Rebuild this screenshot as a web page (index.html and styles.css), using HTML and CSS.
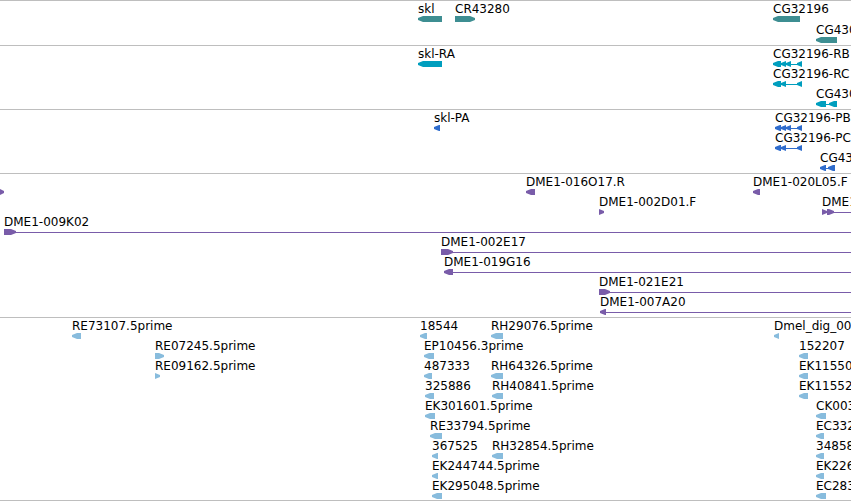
FILE: index.html
```
<!DOCTYPE html>
<html lang="en">
  <head>
    <meta charset="UTF-8" />
    <meta name="viewport" content="width=device-width, initial-scale=1.0" />
    <title>Genome Browser</title>
    <link rel="stylesheet" href="styles.css">
  </head>
  <body>
    <main class="browser">
      <!-- genes -->
      <section class="track genes">
        <div class="row">
          <div class="feature" style="left: 418px"><span class="label">skl</span><div class="glyph"><i class="exon rev" style="width: 24px"></i></div></div>
          <div class="feature" style="left: 455px"><span class="label">CR43280</span><div class="glyph"><i class="exon fwd" style="width: 20px"></i></div></div>
          <div class="feature" style="left: 773px"><span class="label">CG32196</span><div class="glyph"><i class="exon rev" style="width: 27px"></i></div></div>
        </div>
        <div class="row">
          <div class="feature" style="left: 816px"><span class="label">CG430</span><div class="glyph"><i class="exon rev" style="width: 21px"></i></div></div>
        </div>
      </section>

      <!-- transcripts -->
      <section class="track transcripts">
        <div class="row">
          <div class="feature" style="left: 418px"><span class="label">skl-RA</span><div class="glyph"><i class="exon rev" style="width: 24px"></i></div></div>
          <div class="feature" style="left: 773px"><span class="label">CG32196-RB</span><div class="glyph"><i class="exon rev" style="width: 8px"></i><i class="exon rev" style="width: 5px"></i><i class="exon rev" style="width: 5px"></i><i class="intron" style="width: 6px"></i><i class="exon rev" style="width: 5px"></i></div></div>
        </div>
        <div class="row">
          <div class="feature" style="left: 773px"><span class="label">CG32196-RC</span><div class="glyph"><i class="exon rev" style="width: 8px"></i><i class="exon rev" style="width: 5px"></i><i class="intron" style="width: 11px"></i><i class="exon rev" style="width: 5px"></i></div></div>
        </div>
        <div class="row">
          <div class="feature" style="left: 816px"><span class="label">CG430</span><div class="glyph"><i class="exon rev" style="width: 10px"></i><i class="intron" style="width: 3px"></i><i class="exon rev" style="width: 8px"></i></div></div>
        </div>
      </section>

      <!-- proteins -->
      <section class="track proteins">
        <div class="row">
          <div class="feature" style="left: 434px"><span class="label">skl-PA</span><div class="glyph"><i class="exon rev" style="width: 6px"></i></div></div>
          <div class="feature" style="left: 775px"><span class="label">CG32196-PB</span><div class="glyph"><i class="exon rev" style="width: 6px"></i><i class="exon rev" style="width: 5px"></i><i class="exon rev" style="width: 5px"></i><i class="intron" style="width: 6px"></i><i class="exon rev" style="width: 5px"></i></div></div>
        </div>
        <div class="row">
          <div class="feature" style="left: 775px"><span class="label">CG32196-PC</span><div class="glyph"><i class="exon rev" style="width: 6px"></i><i class="exon rev" style="width: 5px"></i><i class="intron" style="width: 11px"></i><i class="exon rev" style="width: 5px"></i></div></div>
        </div>
        <div class="row">
          <div class="feature" style="left: 820px"><span class="label">CG43</span><div class="glyph"><i class="exon rev" style="width: 6px"></i><i class="intron" style="width: 2px"></i><i class="exon rev" style="width: 7px"></i></div></div>
        </div>
      </section>

      <!-- clones -->
      <section class="track clones">
        <div class="row">
          <div class="feature" style="left: 0px"><span class="label"></span><div class="glyph"><i class="exon fwd" style="width: 4px"></i></div></div>
          <div class="feature" style="left: 526px"><span class="label">DME1-016O17.R</span><div class="glyph"><i class="exon rev" style="width: 9px"></i></div></div>
          <div class="feature" style="left: 753px"><span class="label">DME1-020L05.F</span><div class="glyph"><i class="exon rev" style="width: 7px"></i></div></div>
        </div>
        <div class="row">
          <div class="feature" style="left: 599px"><span class="label">DME1-002D01.F</span><div class="glyph"><i class="exon fwd" style="width: 5px"></i></div></div>
          <div class="feature open" style="left: 822px"><span class="label">DME1</span><div class="glyph"><i class="exon fwd" style="width: 5px"></i><i class="exon fwd" style="width: 7px"></i><i class="intron"></i></div></div>
        </div>
        <div class="row">
          <div class="feature open" style="left: 4px"><span class="label">DME1-009K02</span><div class="glyph"><i class="exon fwd" style="width: 12px"></i><i class="intron"></i></div></div>
        </div>
        <div class="row">
          <div class="feature open" style="left: 441px"><span class="label">DME1-002E17</span><div class="glyph"><i class="exon fwd" style="width: 12px"></i><i class="intron"></i></div></div>
        </div>
        <div class="row">
          <div class="feature open" style="left: 444px"><span class="label">DME1-019G16</span><div class="glyph"><i class="exon rev" style="width: 9px"></i><i class="intron"></i></div></div>
        </div>
        <div class="row">
          <div class="feature open" style="left: 599px"><span class="label">DME1-021E21</span><div class="glyph"><i class="exon fwd" style="width: 11px"></i><i class="intron"></i></div></div>
        </div>
        <div class="row">
          <div class="feature open" style="left: 600px"><span class="label">DME1-007A20</span><div class="glyph"><i class="exon rev" style="width: 6px"></i><i class="intron"></i></div></div>
        </div>
      </section>

      <!-- ESTs and insertions -->
      <section class="track ests">
        <div class="row">
          <div class="feature" style="left: 72px"><span class="label">RE73107.5prime</span><div class="glyph"><i class="exon rev" style="width: 9px"></i></div></div>
          <div class="feature" style="left: 420px"><span class="label">18544</span><div class="glyph"><i class="exon rev" style="width: 7px"></i></div></div>
          <div class="feature" style="left: 491px"><span class="label">RH29076.5prime</span><div class="glyph"><i class="exon rev" style="width: 12px"></i></div></div>
          <div class="feature" style="left: 774px"><span class="label">Dmel_dig_00</span><div class="glyph"><i class="exon rev" style="width: 5px"></i></div></div>
        </div>
        <div class="row">
          <div class="feature" style="left: 155px"><span class="label">RE07245.5prime</span><div class="glyph"><i class="exon fwd" style="width: 9px"></i></div></div>
          <div class="feature" style="left: 424px"><span class="label">EP10456.3prime</span><div class="glyph"><i class="exon rev" style="width: 10px"></i></div></div>
          <div class="feature" style="left: 799px"><span class="label">152207</span><div class="glyph"><i class="exon rev" style="width: 9px"></i></div></div>
        </div>
        <div class="row">
          <div class="feature" style="left: 155px"><span class="label">RE09162.5prime</span><div class="glyph"><i class="exon fwd" style="width: 5px"></i></div></div>
          <div class="feature" style="left: 424px"><span class="label">487333</span><div class="glyph"><i class="exon rev" style="width: 8px"></i></div></div>
          <div class="feature" style="left: 491px"><span class="label">RH64326.5prime</span><div class="glyph"><i class="exon rev" style="width: 12px"></i></div></div>
          <div class="feature" style="left: 799px"><span class="label">EK11550</span><div class="glyph"><i class="exon rev" style="width: 9px"></i></div></div>
        </div>
        <div class="row">
          <div class="feature" style="left: 425px"><span class="label">325886</span><div class="glyph"><i class="exon rev" style="width: 9px"></i></div></div>
          <div class="feature" style="left: 492px"><span class="label">RH40841.5prime</span><div class="glyph"><i class="exon rev" style="width: 11px"></i></div></div>
          <div class="feature" style="left: 799px"><span class="label">EK11552</span><div class="glyph"><i class="exon rev" style="width: 9px"></i></div></div>
        </div>
        <div class="row">
          <div class="feature" style="left: 425px"><span class="label">EK301601.5prime</span><div class="glyph"><i class="exon rev" style="width: 10px"></i></div></div>
          <div class="feature" style="left: 816px"><span class="label">CK003</span><div class="glyph"><i class="exon rev" style="width: 10px"></i></div></div>
        </div>
        <div class="row">
          <div class="feature" style="left: 430px"><span class="label">RE33794.5prime</span><div class="glyph"><i class="exon rev" style="width: 12px"></i></div></div>
          <div class="feature" style="left: 816px"><span class="label">EC332</span><div class="glyph"><i class="exon rev" style="width: 8px"></i></div></div>
        </div>
        <div class="row">
          <div class="feature" style="left: 432px"><span class="label">367525</span><div class="glyph"><i class="exon rev" style="width: 6px"></i></div></div>
          <div class="feature" style="left: 492px"><span class="label">RH32854.5prime</span><div class="glyph"><i class="exon rev" style="width: 11px"></i></div></div>
          <div class="feature" style="left: 816px"><span class="label">34858</span><div class="glyph"><i class="exon rev" style="width: 8px"></i></div></div>
        </div>
        <div class="row">
          <div class="feature" style="left: 432px"><span class="label">EK244744.5prime</span><div class="glyph"><i class="exon rev" style="width: 6px"></i></div></div>
          <div class="feature" style="left: 816px"><span class="label">EK226</span><div class="glyph"><i class="exon rev" style="width: 8px"></i></div></div>
        </div>
        <div class="row">
          <div class="feature" style="left: 432px"><span class="label">EK295048.5prime</span><div class="glyph"><i class="exon rev" style="width: 10px"></i></div></div>
          <div class="feature" style="left: 816px"><span class="label">EC283</span><div class="glyph"><i class="exon rev" style="width: 10px"></i></div></div>
        </div>
      </section>
    </main>
  </body>
</html>
```

FILE: styles.css
```
* {
  margin: 0;
  padding: 0;
  box-sizing: border-box;
}

body {
  background: #fff;
  color: #000;
  font-family: "DejaVu Sans", sans-serif;
  font-size: 12px;
  line-height: 14px;
}

.browser {
  border-bottom: 1px solid #bebebe;
  overflow: hidden;
}

/* one band per data type, features are drawn in the track colour */
.track {
  display: flex;
  flex-direction: column;
  padding: 1px 0 2px;
  border-top: 1px solid #bebebe;
}

.genes {
  --color: #3e8e92;
  gap: 1px;
}

.transcripts {
  --color: #009ebe;
}

.proteins {
  --color: #2f6ccc;
}

.clones {
  --color: #795ca9;
}

.ests {
  --color: #88bcdd;
  padding-bottom: 1px;
}

.row {
  position: relative;
  height: 20px;
}

/* placed by its start on the chromosome */
.feature {
  position: absolute;
  top: 0;
  white-space: nowrap;
}

/* runs past the right edge of the view */
.open {
  right: 0;
}

.label {
  display: block;
  height: 14px;
}

.glyph {
  display: flex;
  height: 6px;
}

/* the arrow head is blunt and never longer than the exon */
.exon {
  --head: min(5px, 100%);
  height: 6px;
  background: var(--color);
}

.rev {
  clip-path: polygon(0 33%, var(--head) 0, 100% 0, 100% 100%, var(--head) 100%, 0 67%);
}

.fwd {
  clip-path: polygon(0 0, calc(100% - var(--head)) 0, 100% 33%, 100% 67%, calc(100% - var(--head)) 100%, 0 100%);
}

.intron {
  height: 1px;
  margin-top: 3px;
  background: var(--color);
}

.open .intron {
  flex: 1;
}
```
